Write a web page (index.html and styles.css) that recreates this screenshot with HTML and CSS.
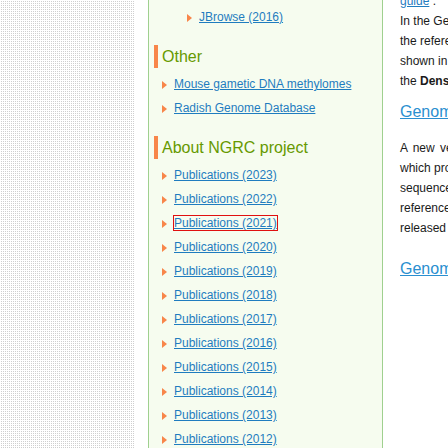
FILE: index.html
```html
<!DOCTYPE html>
<html>
<head>
<meta charset="utf-8">
<link rel="stylesheet" href="styles.css">
</head>
<body>
<div class="page">
  <div class="dots"></div>
  <div class="side">
    <ul class="links sub">
      <li><a href="#">JBrowse (2016)</a></li>
    </ul>
    <h2 class="sect">Other</h2>
    <ul class="links">
      <li><a href="#">Mouse gametic DNA methylomes</a></li>
      <li><a href="#">Radish Genome Database</a></li>
    </ul>
    <h2 class="sect">About NGRC project</h2>
    <ul class="links">
      <li><a href="#">Publications (2023)</a></li>
      <li><a href="#">Publications (2022)</a></li>
      <li><a href="#" class="focused">Publications (2021)</a></li>
      <li><a href="#">Publications (2020)</a></li>
      <li><a href="#">Publications (2019)</a></li>
      <li><a href="#">Publications (2018)</a></li>
      <li><a href="#">Publications (2017)</a></li>
      <li><a href="#">Publications (2016)</a></li>
      <li><a href="#">Publications (2015)</a></li>
      <li><a href="#">Publications (2014)</a></li>
      <li><a href="#">Publications (2013)</a></li>
      <li><a href="#">Publications (2012)</a></li>
    </ul>
  </div>
  <div class="main">
    <p class="intro"><a href="#">guide</a> .<br>In the Genome Browser view, tracks of<br>the reference genome annotations are<br>shown in several panels, including<br>the <b>Density</b> track of gene models.</p>
    <h3 class="gtitle"><a href="#">Genome Browser</a></h3>
    <p><span class="wide">A new version of the genome assembly,</span><br>which provides improved contiguity of the<br>sequences, was constructed and the<br>reference annotations have been<br>released on this site.</p>
    <h3 class="gtitle second"><a href="#">Genome Database</a></h3>
  </div>
</div>
</body>
</html>
```

FILE: styles.css
```css
html, body {
  margin: 0;
  padding: 0;
  background: #ffffff;
}

body {
  font-family: "Liberation Sans", Arial, sans-serif;
  width: 448px;
  height: 448px;
  overflow: hidden;
}

.page {
  display: flex;
  height: 448px;
  overflow: hidden;
}

.dots {
  flex: 0 0 135px;
  margin-right: 13px;
  background-image:
    linear-gradient(90deg, #ffffff 1px, transparent 1px),
    linear-gradient(#ffffff 1px, transparent 1px);
  background-size: 2px 2px;
  background-color: #cfcfcf;
}

.side {
  flex: 0 0 235px;
  box-sizing: border-box;
  border-left: 1px solid #9fd08f;
  border-right: 1px solid #9fd08f;
  background: #f6fcef;
  padding: 5px 0 0 5px;
}

.links {
  list-style: none;
  margin: 0;
  padding: 0;
}

.links li {
  line-height: 24px;
  height: 24px;
  padding-left: 8px;
  white-space: nowrap;
  font-size: 12px;
}

.links li::before {
  content: "";
  display: inline-block;
  width: 0;
  height: 0;
  border-left: 5px solid #f8864a;
  border-top: 4px solid transparent;
  border-bottom: 4px solid transparent;
  margin-right: 7px;
  vertical-align: -1px;
}

.links.sub {
  padding-left: 25px;
}

.links a {
  color: #1f7cbf;
  text-decoration: underline;
}

.links a.focused {
  outline: 1px solid #e01010;
  outline-offset: 0;
}

.sect {
  margin: 16px 0 4px 0;
  border-left: 4px solid #f8864a;
  padding-left: 4px;
  font-size: 16px;
  line-height: 23px;
  height: 23px;
  font-weight: normal;
  color: #669900;
  white-space: nowrap;
}

.main {
  flex: 0 0 auto;
  width: 500px;
  padding-left: 17px;
  color: #1a1a1a;
}

.main p {
  margin: 0;
  font-size: 12px;
  line-height: 20px;
  white-space: nowrap;
}

.main p a {
  color: #1f7cbf;
}

.wide {
  word-spacing: 2px;
}

.intro {
  margin-top: -9px !important;
}

.gtitle {
  margin: 9px 0 14px 0;
  font-size: 16px;
  line-height: 24px;
  font-weight: normal;
  white-space: nowrap;
}

.gtitle.second {
  margin-top: 19px;
}

.gtitle a {
  color: #2a8fd0;
  text-decoration: underline;
}
```
